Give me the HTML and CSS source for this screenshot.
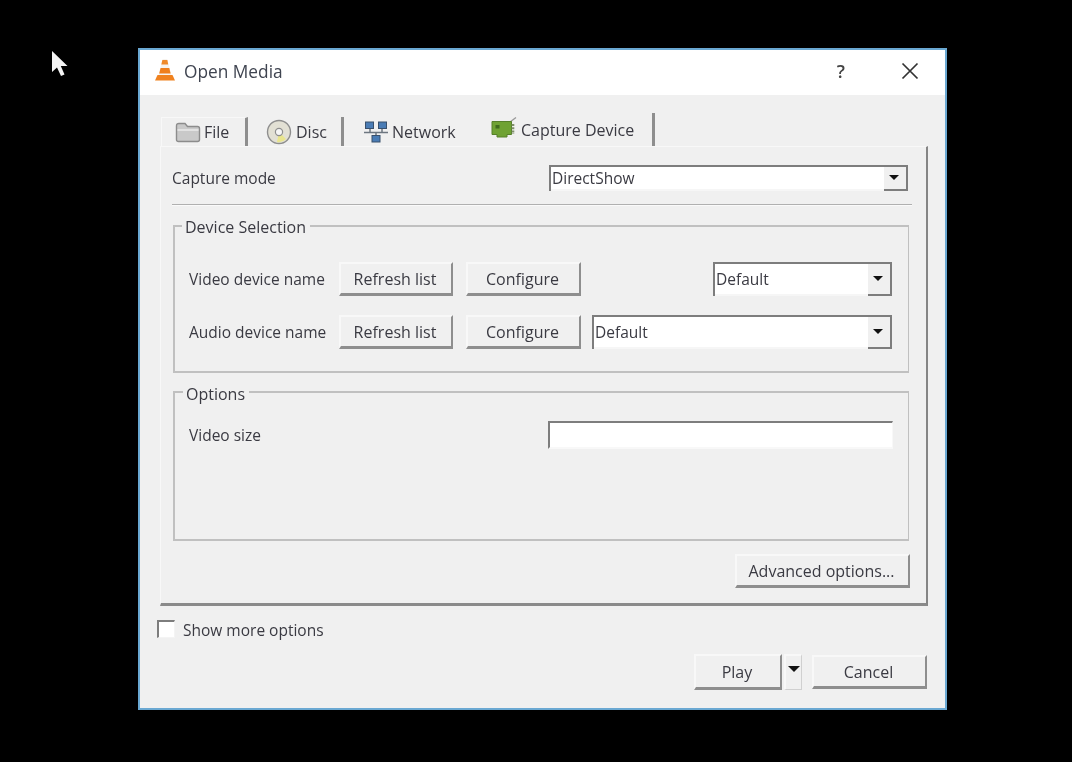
FILE: index.html
```html
<!DOCTYPE html>
<html lang="en">
<head>
<meta charset="utf-8">
<title>Open Media</title>
<link rel="stylesheet" href="styles.css">
</head>
<body>
<svg class="cursor" width="20" height="30" viewBox="0 0 20 30"><path d="M2 1 L2 22 L7 17.5 L11 26 L14.5 24.5 L10.8 16 L17.5 16 Z" fill="#f4f4f4"/></svg>
<div class="window">
  <header class="titlebar">
    <svg class="cone" width="22" height="24" viewBox="0 0 22 24">
      <path d="M8.6 1 H13.2 L18 19 H4 Z" fill="#f7f3ee"/>
      <path d="M8.4 2 H13.4 L14.2 6.5 H7.3 Z" fill="#ef8a2a"/>
      <path d="M6.6 10 H15.3 L16.6 15.5 H5.2 Z" fill="#ef7f1c"/>
      <path d="M3.5 17 H18.5 L21 22.5 H1 Z" fill="#f0821f"/>
    </svg>
    <span class="title">Open Media</span>
    <span class="help">?</span>
    <svg class="close" width="18" height="18" viewBox="0 0 18 18"><path d="M1.5 1.5 L16.5 16.5 M16.5 1.5 L1.5 16.5" stroke="#333" stroke-width="1.7" fill="none"/></svg>
  </header>
  <main class="body">
    <nav class="tabs">
      <div class="tab tab-file">
        <svg class="tab-icon" width="26" height="22" viewBox="0 0 26 22">
          <path d="M1.5 5 Q1.5 2.5 4 2.5 H10 L12.5 5.5 H22.5 Q24.5 5.5 24.5 7.5 V18.5 Q24.5 20.5 22.5 20.5 H3.5 Q1.5 20.5 1.5 18.5 Z" fill="#c9c9c9" stroke="#8c8c8c" stroke-width="1.4"/>
          <path d="M2.5 9 H23.5" stroke="#ededed" stroke-width="1.4"/>
        </svg>
        <span>File</span>
      </div>
      <div class="tab tab-disc">
        <svg class="tab-icon" width="26" height="26" viewBox="0 0 26 26">
          <circle cx="13" cy="13" r="11.5" fill="#e2e0d4" stroke="#8e8e8e" stroke-width="1.4"/>
          <path d="M13 13 L20 20 A10 10 0 0 1 11 23 Z" fill="#e9e58e"/>
          <circle cx="13" cy="13" r="3.6" fill="#f6f6f6" stroke="#8e8e8e" stroke-width="1.2"/>
        </svg>
        <span>Disc</span>
      </div>
      <div class="tab tab-network">
        <svg class="tab-icon" width="26" height="22" viewBox="0 0 26 22">
          <path d="M1 11.5 H25 M7 7 V11.5 M19 7 V11.5 M13 11.5 V15" stroke="#6d7680" stroke-width="1.5" fill="none"/>
          <rect x="2.5" y="1" width="8" height="6.5" fill="#4a7cb5" stroke="#39506c"/>
          <rect x="15.5" y="1" width="8" height="6.5" fill="#4a7cb5" stroke="#39506c"/>
          <rect x="9" y="14.5" width="8" height="6.5" fill="#4a7cb5" stroke="#39506c"/>
        </svg>
        <span>Network</span>
      </div>
      <div class="tab tab-capture">
        <svg class="tab-icon" width="26" height="22" viewBox="0 0 26 22">
          <path d="M19 5 L25 0.5" stroke="#9a9a9a" stroke-width="1.3" fill="none"/>
          <path d="M1 4.5 H20.5 V17.5 H16 V20 H6 V17.5 H1 Z" fill="#6fa233" stroke="#56802a" stroke-width="1"/>
          <rect x="4.5" y="8" width="4" height="3.5" fill="#3f6b1c"/>
          <path d="M22 7 V17" stroke="#7f8f6a" stroke-width="2.6" stroke-dasharray="2 1.2" fill="none"/>
        </svg>
        <span>Capture Device</span>
      </div>
    </nav>
    <section class="pane">
      <div class="capture-row">
        <label class="text">Capture mode</label>
        <div class="combo combo-mode"><span class="combo-value">DirectShow</span><span class="combo-arrow"></span></div>
      </div>
      <hr class="divider">
      <fieldset class="group group-device">
        <legend>Device Selection</legend>
        <div class="device-row">
          <label class="device-label">Video device name</label>
          <button class="btn btn-refresh">Refresh list</button>
          <button class="btn btn-configure">Configure</button>
          <div class="combo combo-video"><span class="combo-value">Default</span><span class="combo-arrow"></span></div>
        </div>
        <div class="device-row">
          <label class="device-label">Audio device name</label>
          <button class="btn btn-refresh">Refresh list</button>
          <button class="btn btn-configure">Configure</button>
          <div class="combo combo-audio"><span class="combo-value">Default</span><span class="combo-arrow"></span></div>
        </div>
      </fieldset>
      <fieldset class="group group-options">
        <legend>Options</legend>
        <div class="options-row">
          <label class="device-label">Video size</label>
          <div class="field"></div>
        </div>
      </fieldset>
      <button class="btn btn-advanced">Advanced options...</button>
    </section>
    <div class="more-row">
      <span class="checkbox"></span>
      <span class="more-label">Show more options</span>
    </div>
    <div class="actions">
      <button class="btn btn-play">Play</button>
      <button class="btn btn-drop"><span class="arrow"></span></button>
      <button class="btn btn-cancel">Cancel</button>
    </div>
  </main>
</div>
</body>
</html>
```
FILE: styles.css
```css
* { box-sizing: border-box; }
html, body { margin: 0; height: 100%; background: #000; overflow: hidden; }
body { font-family: "Open Sans", "Noto Sans", sans-serif; font-size: 15.5px; color: #3a3a42; }
.cursor { position: absolute; left: 50px; top: 50px; filter: blur(.7px); }
.window {
  position: absolute; left: 138px; top: 48px; width: 809px; height: 662px;
  border: 2px solid #6aa8d2; background: #f0f0f0; display: flex; flex-direction: column;
  filter: blur(.6px);
}
.titlebar { height: 45px; background: #fff; display: flex; align-items: center; padding: 0 0 3px 14px; flex: none; }
.cone { flex: none; margin-top: -2px; }
.title { margin-left: 8px; font-size: 17.3px; color: #3f4450; }
.help { margin-left: auto; font-size: 18px; font-weight: 600; color: #444; }
.close { margin-left: 56px; margin-right: 26px; }
.body { flex: 1; display: flex; flex-direction: column; padding: 18px 17px 0 20px; }
.tabs { display: flex; align-items: flex-end; height: 33px; padding-left: 1px; flex: none; font-size: 16px; }
.tab { height: 29px; display: flex; align-items: center; border-right: 3px solid #8e8e8e; }
.tab span { white-space: nowrap; }
.tab-file { width: 87px; padding-left: 13px; border-left: 1px solid #f8f8f8; border-top: 1px solid #f8f8f8; }
.tab-file .tab-icon { margin-right: 3px; }
.tab-disc { width: 96px; padding-left: 18px; }
.tab-disc .tab-icon { margin-right: 4px; }
.tab-network { width: 132px; padding-left: 19px; border-right: 0; }
.tab-network .tab-icon { margin-right: 3px; }
.tab-capture { width: 179px; height: 33px; padding: 0 0 0 15px; background: #f0f0f0; }
.tab-capture .tab-icon { margin: -4px 4px 0 0; }
.pane {
  height: 460px; display: flex; flex-direction: column; padding: 18px 14px 15px 11px;
  border-left: 1px solid #f8f8f8; border-top: 1px solid #f8f8f8;
  border-right: 2px solid #858585; border-bottom: 3px solid #8a8a8a; flex: none;
}
.capture-row { display: flex; align-items: center; justify-content: space-between; height: 26px; flex: none; }
.combo { display: flex; height: 26px; background: #fff; border-top: 2px solid #7d7d7d; border-left: 2px solid #7d7d7d; border-right: 2px solid #7d7d7d; flex: none; }
.combo-value { flex: 1; padding-left: 1px; line-height: 22px; border-bottom: 2px solid #f6f6f6; }
.combo-arrow { width: 22px; background: #f0f0f0; border-bottom: 2px solid #7d7d7d; position: relative; flex: none; }
.combo-arrow::after, .arrow { content: ""; display: block; width: 0; height: 0; border-left: 6px solid transparent; border-right: 6px solid transparent; border-top: 6px solid #111; }
.combo-arrow::after { position: absolute; left: 5px; top: 8px; border-left-width: 5px; border-right-width: 5px; border-top-width: 5px; }
.combo-mode { width: 359px; margin-right: 4px; }
.combo-video { width: 179px; margin-left: auto; height: 34px; }
.combo-audio { width: 300px; margin-left: auto; height: 34px; }
.combo-video .combo-value, .combo-audio .combo-value { line-height: 30px; }
.combo-video .combo-arrow::after, .combo-audio .combo-arrow::after { top: 12px; }
.combo-video .combo-arrow, .combo-audio .combo-arrow { height: 32px; }
.divider { margin: 13px 0 0; border: 0; height: 2px; background: linear-gradient(#b0b0b0 50%, #fafafa 50%); flex: none; }
.group { margin: 10px 3px 0 1px; padding: 0; border: 2px solid #c0c0c0; border-right-width: 1px; min-width: 0; flex: none; }
.group legend { margin-left: -7px; padding: 0 4px 0 3px; height: 20px; line-height: 22px; font-size: 16px; }
.group-device { padding: 26px 16px 22px 14px; }
.group-options { flex: 1; margin-top: 9px; padding: 19px 15px 0 14px; }
.group-options legend { margin-left: -6px; line-height: 24px; }
.device-row { display: flex; align-items: center; height: 34px; }
.device-row + .device-row { margin-top: 19px; }
.device-label { width: 150px; white-space: nowrap; flex: none; }
.btn {
  font: inherit; font-size: 16px; color: inherit; padding: 0 2px 0 0; background: #f0f0f0; cursor: default;
  border: 0; border-top: 2px solid #f8f8f8; border-left: 2px solid #f8f8f8;
  border-right: 2px solid #8e8e8e; border-bottom: 3px solid #8e8e8e;
  flex: none;
}
.btn-refresh { width: 114px; height: 34px; }
.btn-configure { width: 115px; height: 34px; margin-left: 13px; }
.options-row { display: flex; justify-content: space-between; align-items: center; height: 28px; }
.field { width: 345px; height: 28px; background: #fff; border-top: 2px solid #7d7d7d; border-left: 2px solid #7d7d7d; border-right: 1px solid #f8f8f8; border-bottom: 2px solid #f8f8f8; flex: none; }
.btn-advanced { width: 175px; height: 34px; margin-top: 13px; align-self: flex-end; margin-right: 2px; }
.more-row { display: flex; align-items: center; height: 18px; margin-top: 14px; margin-left: -3px; flex: none; }
.more-label { padding-top: 2px; }
.checkbox { width: 18px; height: 18px; background: #fff; border-top: 2px solid #7d7d7d; border-left: 2px solid #7d7d7d; border-right: 1px solid #f4f4f4; border-bottom: 1px solid #f4f4f4; margin-right: 8px; flex: none; }
.actions { display: flex; justify-content: flex-end; align-items: center; margin-top: 16px; margin-right: 1px; flex: none; }
.btn-play { width: 88px; height: 36px; }
.btn-drop { width: 18px; height: 36px; margin-left: 2px; display: flex; align-items: flex-start; justify-content: center; padding: 10px 0 0; border-right: 1px solid #d0d0d0; border-bottom: 1px solid #d0d0d0; }
.btn-cancel { width: 115px; height: 34px; margin-left: 10px; }
```
